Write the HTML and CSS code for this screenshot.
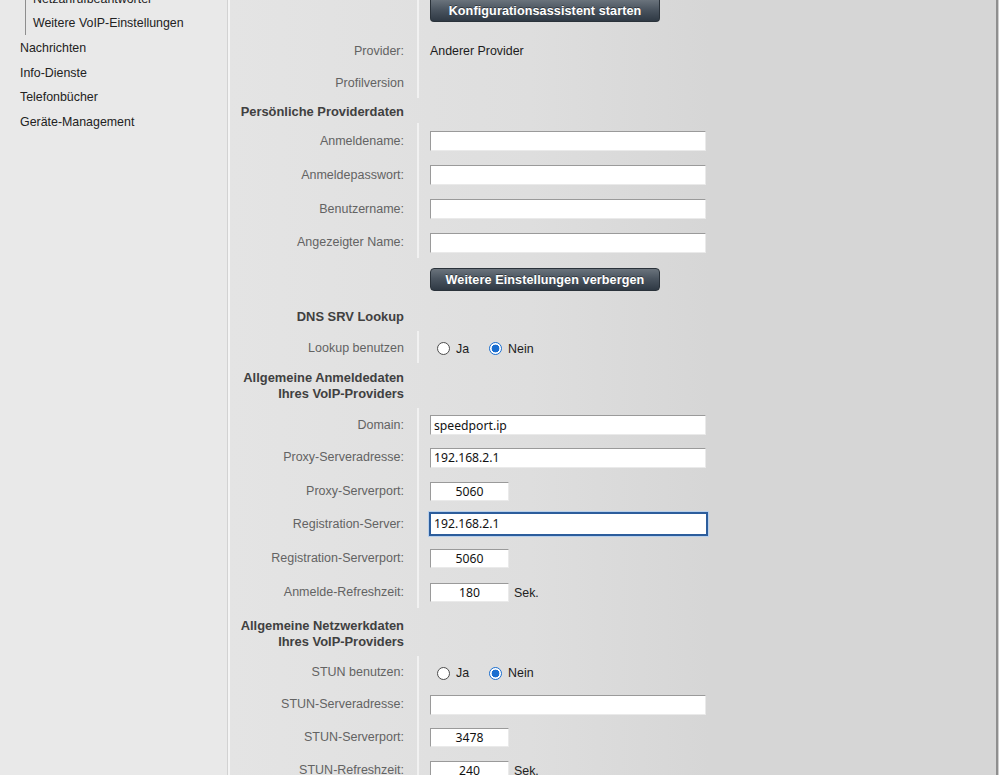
FILE: index.html
```html
<!DOCTYPE html>
<html lang="de">
<head>
<meta charset="utf-8">
<title>VoIP-Einstellungen</title>
<link rel="stylesheet" href="styles.css">
</head>
<body>
<div class="page">
  <nav class="sidebar">
    <ul class="sub">
      <li>Netzanrufbeantworter</li>
      <li>Weitere VoIP-Einstellungen</li>
    </ul>
    <ul class="nav">
      <li>Nachrichten</li>
      <li>Info-Dienste</li>
      <li>Telefonbücher</li>
      <li>Geräte-Management</li>
    </ul>
  </nav>
  <main class="content">
    <div class="row h34"><div class="lab line"></div><div class="val top"><button class="btn">Konfigurationsassistent starten</button></div></div>
    <div class="row h32"><div class="lab line">Provider:</div><div class="val text">Anderer Provider</div></div>
    <div class="row h32"><div class="lab line">Profilversion</div><div class="val"></div></div>
    <div class="row h25"><div class="lab head">Persönliche Providerdaten</div><div class="val"></div></div>
    <div class="row h34"><div class="lab line">Anmeldename:</div><div class="val"><input class="inp wide" type="text"></div></div>
    <div class="row h34"><div class="lab line">Anmeldepasswort:</div><div class="val"><input class="inp wide" type="text"></div></div>
    <div class="row h34"><div class="lab line">Benutzername:</div><div class="val"><input class="inp wide" type="text"></div></div>
    <div class="row h33"><div class="lab line">Angezeigter Name:</div><div class="val"><input class="inp wide" type="text"></div></div>
    <div class="row h42"><div class="lab"></div><div class="val top pad10"><button class="btn">Weitere Einstellungen verbergen</button></div></div>
    <div class="row h31"><div class="lab head">DNS SRV Lookup</div><div class="val"></div></div>
    <div class="row h32"><div class="lab line">Lookup benutzen</div><div class="val"><span class="radio"></span><span class="rlabel">Ja</span><span class="radio on"></span><span class="rlabel">Nein</span></div></div>
    <div class="row h45"><div class="lab head two pt7">Allgemeine Anmeldedaten<br>Ihres VoIP-Providers</div><div class="val"></div></div>
    <div class="row h32"><div class="lab line">Domain:</div><div class="val"><input class="inp wide" type="text" value="speedport.ip"></div></div>
    <div class="row h33"><div class="lab line">Proxy-Serveradresse:</div><div class="val"><input class="inp wide" type="text" value="192.168.2.1"></div></div>
    <div class="row h34"><div class="lab line">Proxy-Serverport:</div><div class="val"><input class="inp small" type="text" value="5060"></div></div>
    <div class="row h33"><div class="lab line">Registration-Server:</div><div class="val"><input class="inp wide focus" type="text" value="192.168.2.1"></div></div>
    <div class="row h34"><div class="lab line">Registration-Serverport:</div><div class="val"><input class="inp small" type="text" value="5060"></div></div>
    <div class="row h34"><div class="lab line">Anmelde-Refreshzeit:</div><div class="val"><input class="inp small" type="text" value="180"><span class="unit">Sek.</span></div></div>
    <div class="row h48"><div class="lab head two pt10">Allgemeine Netzwerkdaten<br>Ihres VoIP-Providers</div><div class="val"></div></div>
    <div class="row h31"><div class="lab line">STUN benutzen:</div><div class="val"><span class="radio"></span><span class="rlabel">Ja</span><span class="radio on"></span><span class="rlabel">Nein</span></div></div>
    <div class="row h33"><div class="lab line">STUN-Serveradresse:</div><div class="val"><input class="inp wide" type="text"></div></div>
    <div class="row h33"><div class="lab line">STUN-Serverport:</div><div class="val"><input class="inp small" type="text" value="3478"></div></div>
    <div class="row h33"><div class="lab line">STUN-Refreshzeit:</div><div class="val"><input class="inp small" type="text" value="240"><span class="unit">Sek.</span></div></div>
  </main>
  <div class="edge"></div>
</div>
</body>
</html>
```
FILE: styles.css
```css
* { box-sizing: border-box; }
html, body { margin: 0; padding: 0; }
body {
  width: 999px;
  height: 775px;
  overflow: hidden;
  font-family: "Liberation Sans", Arial, sans-serif;
  background: #d6d6d6;
}
.page {
  display: flex;
  height: 775px;
}
.sidebar {
  width: 228px;
  flex: none;
  background: #e9e9e9;
  border-right: 1px solid #d2d2d2;
  font-size: 12.4px;
  color: #222;
}
.sidebar ul { list-style: none; margin: 0; padding: 0; }
.sub {
  margin: -13px 0 0 25px !important;
  border-left: 1px solid #8e8e8e;
  padding-left: 7px !important;
}
.sub li { height: 24px; line-height: 24px; white-space: nowrap; }
.nav { margin-top: 1px !important; }
.nav li { height: 24.6px; line-height: 24px; padding-left: 20px; }

.content {
  width: 768px;
  flex: none;
  border-left: 2px solid #f4f4f4;
  background: linear-gradient(to right, #e4e4e4 0px, #dedede 300px, #d6d6d6 480px, #d6d6d6 100%);
  display: flex;
  flex-direction: column;
}
.edge {
  flex: 1;
  border-left: 2px solid #8f8f8f;
  background: #cfcfcf;
}
.row { display: flex; flex: none; }
.h25 { height: 25px; } .h31 { height: 31px; } .h32 { height: 32px; }
.h33 { height: 33px; } .h34 { height: 34px; } .h42 { height: 42px; }
.h45 { height: 45px; } .h48 { height: 48px; }

.lab {
  width: 189px;
  flex: none;
  padding-right: 13px;
  padding-top: 1px;
  text-align: right;
  font-size: 12.5px;
  color: #636363;
  display: flex;
  align-items: center;
  justify-content: flex-end;
  border-right: 2px solid transparent;
  white-space: nowrap;
}
.lab.line { border-right-color: #f1f1f1; }
.lab.head {
  font-weight: bold;
  color: #404040;
  font-size: 12.9px;
}
.lab.two {
  display: block;
  line-height: 15.5px;
}
.pt7 { padding-top: 7px; }
.pt10 { padding-top: 10px; }

.val {
  flex: 1;
  padding-left: 11px;
  display: flex;
  align-items: center;
  font-size: 12.4px;
  color: #1c1c1c;
}
.val.top { align-items: flex-start; }
.val.pad10 { padding-top: 10px; }
.val.text { padding-top: 1px; }

.btn {
  width: 230px;
  height: 23px;
  margin: 0;
  padding: 0;
  border: 1px solid #2a323a;
  border-radius: 4px;
  background: linear-gradient(to bottom, #6a737c 0%, #4b5560 45%, #2f3944 100%);
  color: #fff;
  font-family: "Liberation Sans", Arial, sans-serif;
  font-weight: bold;
  font-size: 12.6px;
  letter-spacing: 0.1px;
  text-shadow: 0 -1px 0 rgba(0,0,0,0.4);
}
.val.top > .btn:first-child { height: 22px; border-top-left-radius: 0; border-top-right-radius: 0; border-top: none; }
.val.pad10 > .btn:first-child { height: 23px; border-radius: 4px; border-top: 1px solid #2a323a; }

.inp {
  height: 20px;
  margin: 2px 0 0 0;
  padding: 0 3px;
  background: #fff;
  border: 1px solid;
  border-color: #9a9a9a #eaeaea #eaeaea #9a9a9a;
  font-family: "Noto Sans", "DejaVu Sans", sans-serif;
  font-size: 12.2px;
  color: #111;
  outline: none;
}
.inp.wide { width: 276px; }
.inp.small { width: 79px; height: 19px; text-align: center; }
.inp.focus {
  width: 279px;
  height: 24px;
  margin-left: -1px;
  margin-top: 0;
  border: 2px solid #2c5d9c;
  box-shadow: 0 0 0 1px #b8d0ec;
  padding-left: 3px;
}
.unit { margin-left: 5px; margin-top: 3px; color: #222; }

.radio {
  width: 13px;
  height: 13px;
  border-radius: 50%;
  border: 1px solid #4d4d4d;
  background: #fff;
  margin: 3px 6px 0 7px;
  flex: none;
}
.radio.on {
  border-color: #1a6ed0;
  background: radial-gradient(circle, #1a6ed0 0 3.6px, #fff 4.2px);
  margin-left: 20px;
}
.rlabel { margin-top: 3px; color: #1c1c1c; }
```
